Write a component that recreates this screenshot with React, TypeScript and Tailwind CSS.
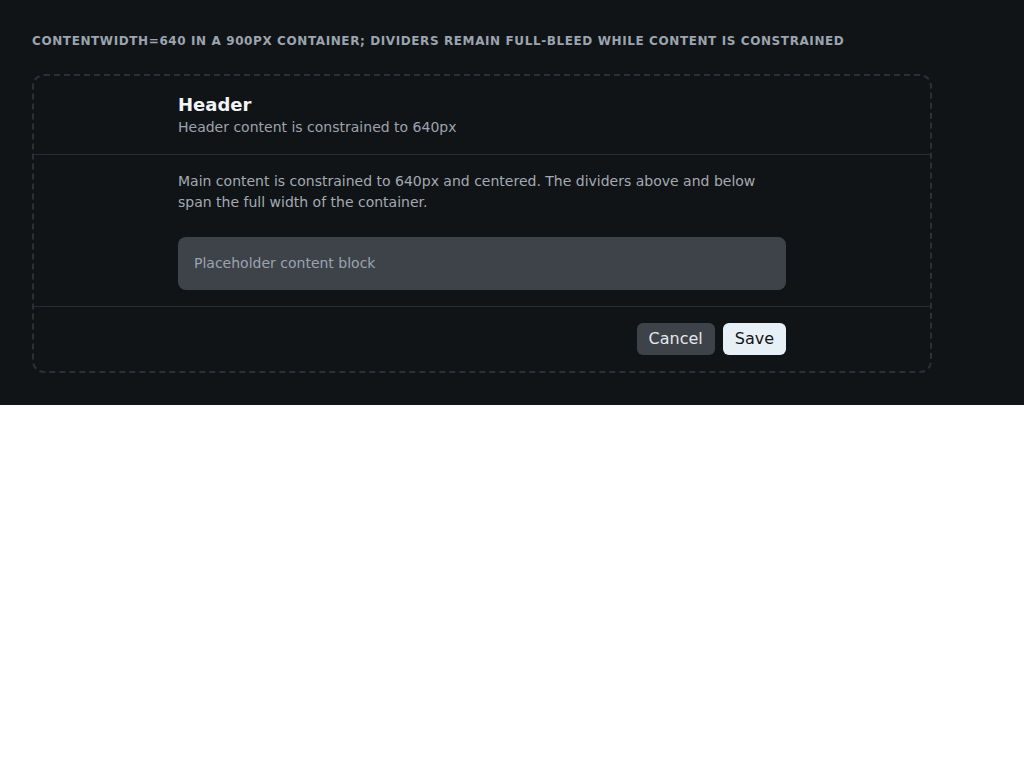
import React from "react";

const App: React.FC = () => {
  return (
    <div
      className="bg-[#111416] p-8"
      style={{ fontFamily: '"DejaVu Sans", "Noto Sans", sans-serif' }}
    >
      <div className="text-xs leading-[18px] font-bold uppercase tracking-wider text-[#9ba4b0] mb-6">
        contentWidth=640 in a 900px container; dividers remain full-bleed while content is constrained
      </div>

      {/* container: dividers go edge to edge, content is 640 wide */}
      <div className="w-[900px] border-2 border-dashed border-[#2c3035] rounded-xl">
        <div className="border-b border-[#2a2e33]">
          <div className="w-[640px] mx-auto px-4 py-4">
            <h2 className="text-lg leading-[1.4] font-bold text-[#f1f5f9]">Header</h2>
            <p className="text-sm leading-[21px] text-[#9ca3af]">Header content is constrained to 640px</p>
          </div>
        </div>

        <div className="border-b border-[#2a2e33]">
          <div className="w-[640px] mx-auto px-4 py-4">
            <p className="text-sm leading-[21px] text-[#a3aab4]">
              Main content is constrained to 640px and centered. The dividers above and below span the full width of
              the container.
            </p>
            <div className="mt-6 bg-[#3e4249] rounded-lg p-4 text-sm leading-[21px] text-[#9ca3af]">
              Placeholder content block
            </div>
          </div>
        </div>

        <div className="w-[640px] mx-auto px-4 py-4 flex justify-end gap-2">
          <button className="bg-[#3e4249] text-[#e5e7eb] rounded-md px-3 py-1 text-base leading-6">Cancel</button>
          <button className="bg-[#e8f0f7] text-[#111416] rounded-md px-3 py-1 text-base leading-6">Save</button>
        </div>
      </div>
    </div>
  );
};

export default App;
